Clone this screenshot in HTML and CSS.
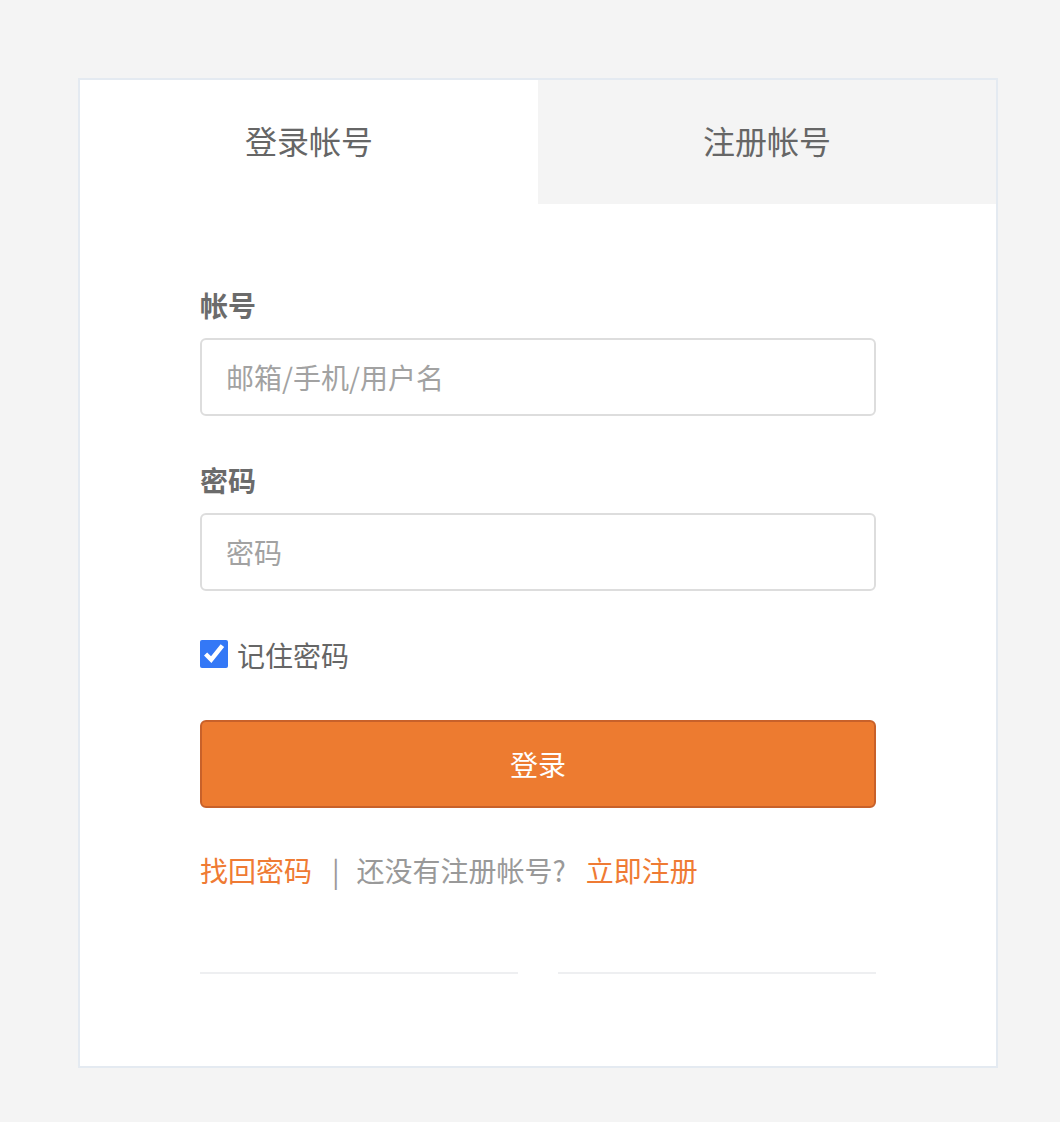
FILE: index.html
```html
<!DOCTYPE html>
<html lang="zh-CN">

<head>
    <meta charset="UTF-8">
    <meta name="viewport" content="width=device-width, initial-scale=1.0">
    <title>登录帐号</title>
    <link rel="stylesheet" href="styles.css">
</head>

<body>
    <div class="card">
        <div class="tabs">
            <a class="tab active">登录帐号</a>
            <a class="tab">注册帐号</a>
        </div>

        <form class="login-form">
            <label class="field-label" for="account">帐号</label>
            <input class="field-input" type="text" id="account" placeholder="邮箱/手机/用户名">

            <label class="field-label second" for="password">密码</label>
            <input class="field-input" type="password" id="password" placeholder="密码">

            <label class="remember">
                <input type="checkbox" checked>
                <span>记住密码</span>
            </label>

            <button type="submit" class="submit-btn">登录</button>

            <div class="links">
                <a class="link">找回密码</a>
                <span class="sep">|</span>
                <span class="hint">还没有注册帐号?</span>
                <a class="link">立即注册</a>
            </div>

            <div class="divider">
                <span class="line"></span>
                <span class="line"></span>
            </div>
        </form>
    </div>
</body>

</html>
```

FILE: styles.css
```css
* {
    margin: 0;
    padding: 0;
    box-sizing: border-box;
    font-family: "Noto Sans CJK SC", "Noto Sans", sans-serif;
}

body {
    background-color: #f4f4f4;
    padding: 78px;
}

.card {
    width: 920px;
    height: 990px;
    background-color: #fff;
    border: 2px solid #e4eaf1;
}

.tabs {
    display: flex;
}

.tab {
    flex: 1;
    height: 124px;
    padding-bottom: 5px;
    display: flex;
    align-items: center;
    justify-content: center;
    font-size: 32px;
    color: #666;
    background-color: #f4f4f4;
    cursor: pointer;
}

.tab.active {
    background-color: #fff;
}

.login-form {
    display: flex;
    flex-direction: column;
    padding: 81px 120px 0;
}

.field-label {
    font-size: 28px;
    line-height: 40px;
    font-weight: 700;
    color: #6b6b6b;
    margin-bottom: 13px;
}

.field-label.second {
    margin-top: 44px;
}

.field-input {
    height: 78px;
    border: 2px solid #ddd;
    border-radius: 6px;
    padding: 0 24px;
    font-size: 28px;
    color: #333;
    outline: none;
}

.field-input::placeholder {
    color: #a2a2a2;
}

.remember {
    display: flex;
    align-items: center;
    gap: 9px;
    height: 40px;
    margin-top: 44px;
    font-size: 28px;
    color: #666;
}

.remember input {
    width: 28px;
    height: 28px;
    accent-color: #3478f6;
    margin-top: -2px;
}

.submit-btn {
    height: 88px;
    margin-top: 45px;
    background-color: #ed7b30;
    border: 2px solid #c8612a;
    border-radius: 6px;
    color: #fff;
    font-size: 28px;
    cursor: pointer;
}

.links {
    display: flex;
    align-items: center;
    height: 40px;
    margin-top: 42px;
    font-size: 28px;
}

.link {
    color: #ef7b34;
    cursor: pointer;
}

.sep {
    color: #999;
    margin: 0 17px 0 20px;
}

.hint {
    color: #999;
    margin-right: 20px;
}

.divider {
    display: flex;
    justify-content: space-between;
    margin-top: 82px;
}

.line {
    width: 318px;
    height: 2px;
    background-color: #eeeff1;
}
```
